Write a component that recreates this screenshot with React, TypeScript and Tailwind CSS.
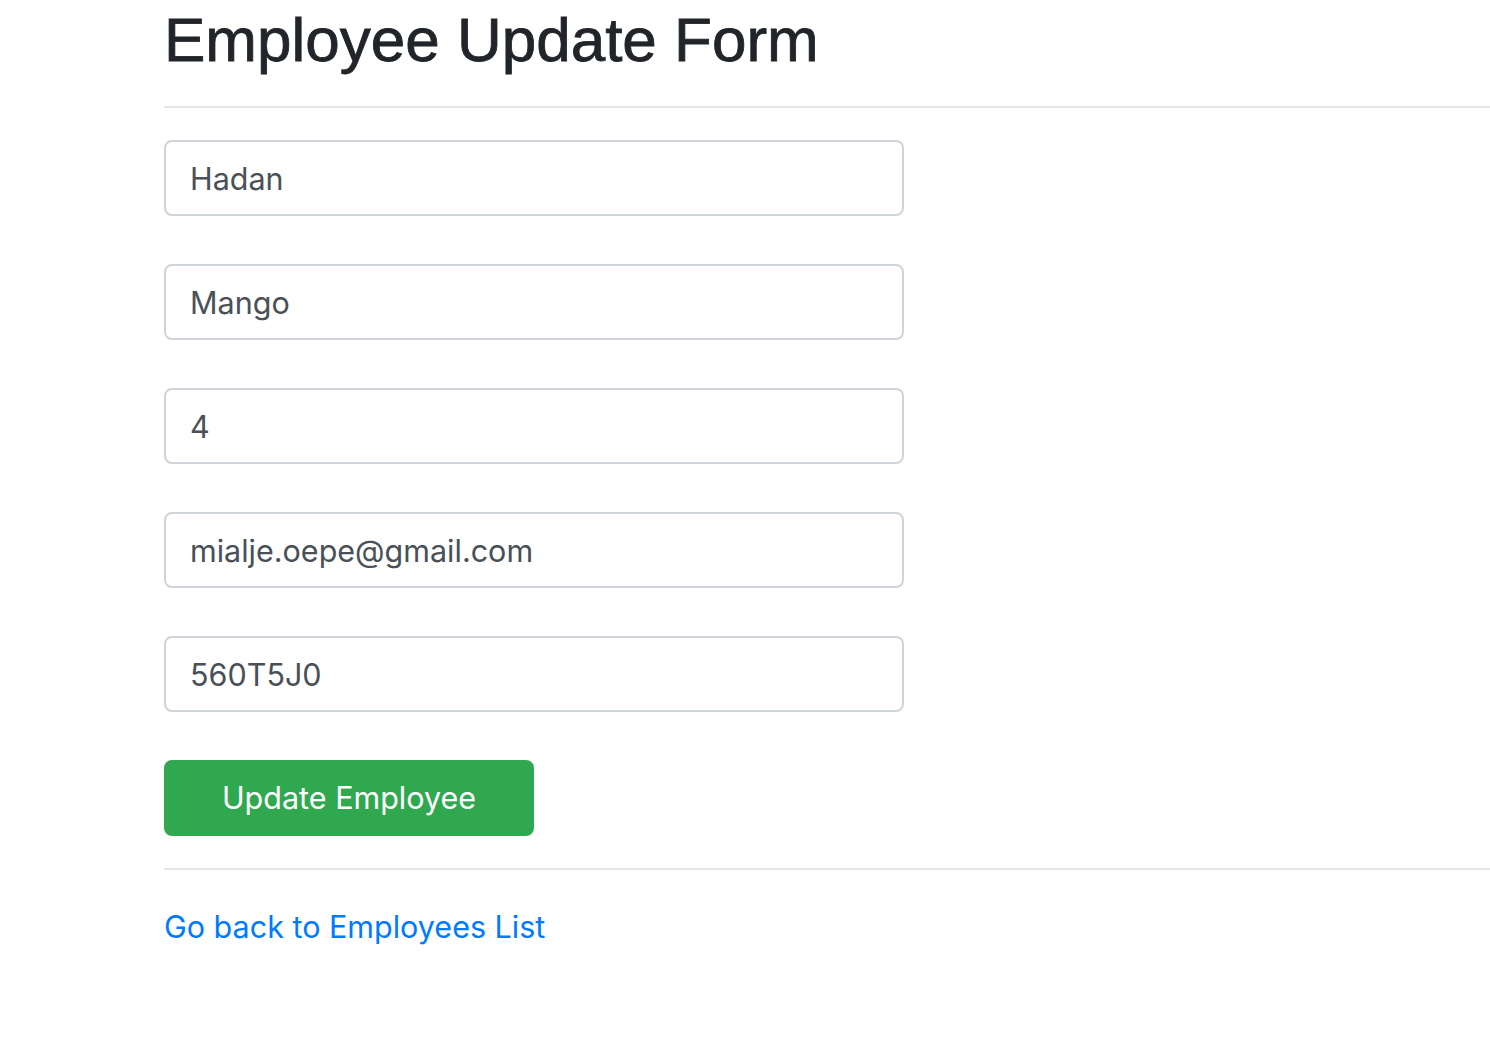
import React from "react";

const fields = ["Hadan", "Mango", "4", "mialje.oepe@gmail.com", "560T5J0"];

export default function App() {
  return (
    <div className="min-h-[1050px] bg-white pl-[164px] font-['Inter',sans-serif]">
      <h1 className="font-['Liberation_Sans',Arial,sans-serif] text-[62px] leading-[80px] font-normal text-[#212529] [-webkit-text-stroke:0.8px_#212529]">
        Employee Update Form
      </h1>
      <hr className="mt-[26px] border-0 border-t-2 border-[#e5e5e5]" />
      <form className="mt-[32px] flex w-[740px] flex-col gap-[48px]">
        {fields.map((v, i) => (
          <input
            key={i}
            defaultValue={v}
            className="h-[76px] w-full rounded-[8px] border-2 border-[#ced4da] bg-white px-[24px] text-[30.5px] text-[#495057] outline-none"
          />
        ))}
        <button
          type="button"
          className="h-[76px] w-[370px] rounded-[8px] bg-[#2fa84f] text-[30.5px] text-white"
        >
          Update Employee
        </button>
      </form>
      <hr className="mt-[32px] border-0 border-t-2 border-[#e5e5e5]" />
      <a href="#" className="mt-[33px] inline-block text-[30.5px] leading-[48px] text-[#007bff]">
        Go back to Employees List
      </a>
    </div>
  );
}
